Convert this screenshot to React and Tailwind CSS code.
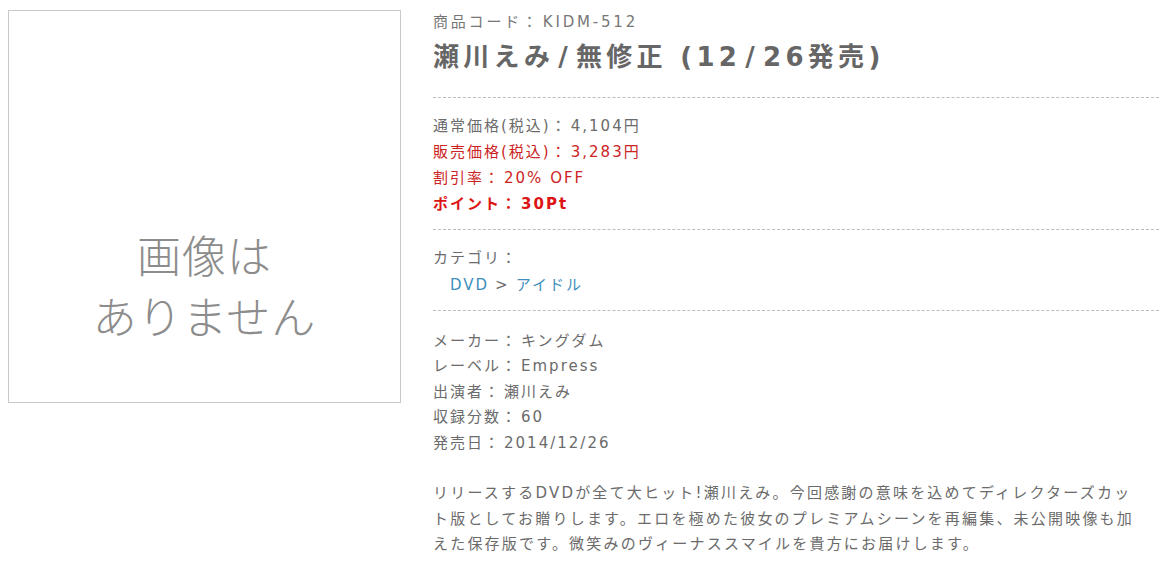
import React from 'react';

const product = {
  code: 'KIDM-512',
  listPrice: '4,104円',
  salePrice: '3,283円',
  discount: '20% OFF',
  points: '30Pt',
  specs: [
    ['メーカー', 'キングダム'],
    ['レーベル', 'Empress'],
    ['出演者', '瀬川えみ'],
    ['収録分数', '60'],
    ['発売日', '2014/12/26'],
  ],
};

// full-width colon, kept in the CJK face so it keeps its width
const Colon = () => (
  <span className="font-['Noto_Sans_CJK_JP',sans-serif] leading-none mr-[3px]">：</span>
);

const Slash = () => <span className="mx-[4px]">/</span>;

const NoImage = () => (
  <div className="w-[393px] h-[393px] border border-[#c9c9c9] flex flex-col items-center pt-[216px] text-[44px] leading-[61px] font-light text-[#8c8c8c] tracking-[1px]">
    <span>画像は</span>
    <span>ありません</span>
  </div>
);

const App = () => {
  return (
    <div className="w-[1171px] h-[563px] overflow-hidden bg-white flex font-['DejaVu_Sans','Noto_Sans_CJK_JP',sans-serif] text-[#6b6b6b]">
      {/* Image */}
      <div className="pl-2 pt-[10px] flex-shrink-0">
        <NoImage />
      </div>

      {/* Details */}
      <div className="ml-[32px] w-[726px] pt-[10px] text-[15px] leading-[25.5px] tracking-[2px]">
        <p className="text-[#777] tracking-[2.8px]">商品コード<Colon />{product.code}</p>
        <h1 className="mt-[5px] text-[26px] leading-[32px] font-bold tracking-[4.3px] text-[#666]">
          瀬川えみ<Slash />無修正 (12<Slash />26発売)
        </h1>

        <div className="mt-[24px] border-t border-dashed border-[#bdbdbd] pt-[15px] pb-3 leading-[26px]">
          <p>通常価格(税込)<Colon />{product.listPrice}</p>
          <p className="text-[#cc2424]">販売価格(税込)<Colon />{product.salePrice}</p>
          <p className="text-[#cc2424]">割引率<Colon />{product.discount}</p>
          <p className="text-[#dd1414] font-bold">ポイント<Colon />{product.points}</p>
        </div>

        <div className="border-t border-dashed border-[#bdbdbd] pt-[15px] pb-[10px]">
          <p className="leading-[26px]">カテゴリ<Colon /></p>
          <p className="pl-[17px] leading-[29px]">
            <a className="text-[#3f8fbd]">DVD</a>
            <span className="mx-[6px]">&gt;</span>
            <a className="text-[#3f8fbd]">アイドル</a>
          </p>
        </div>

        <div className="border-t border-dashed border-[#bdbdbd] pt-[18px]">
          {product.specs.map(([label, value]) => (
            <p key={label}>{label}<Colon />{value}</p>
          ))}
        </div>

        <p className="mt-[25px] tracking-[2.2px] whitespace-nowrap">
          リリースするDVDが全て大ヒット!瀬川えみ。今回感謝の意味を込めてディレクターズカッ<br />
          ト版としてお贈りします。エロを極めた彼女のプレミアムシーンを再編集、未公開映像も加<br />
          えた保存版です。微笑みのヴィーナススマイルを貴方にお届けします。
        </p>
      </div>
    </div>
  );
};

export default App;
